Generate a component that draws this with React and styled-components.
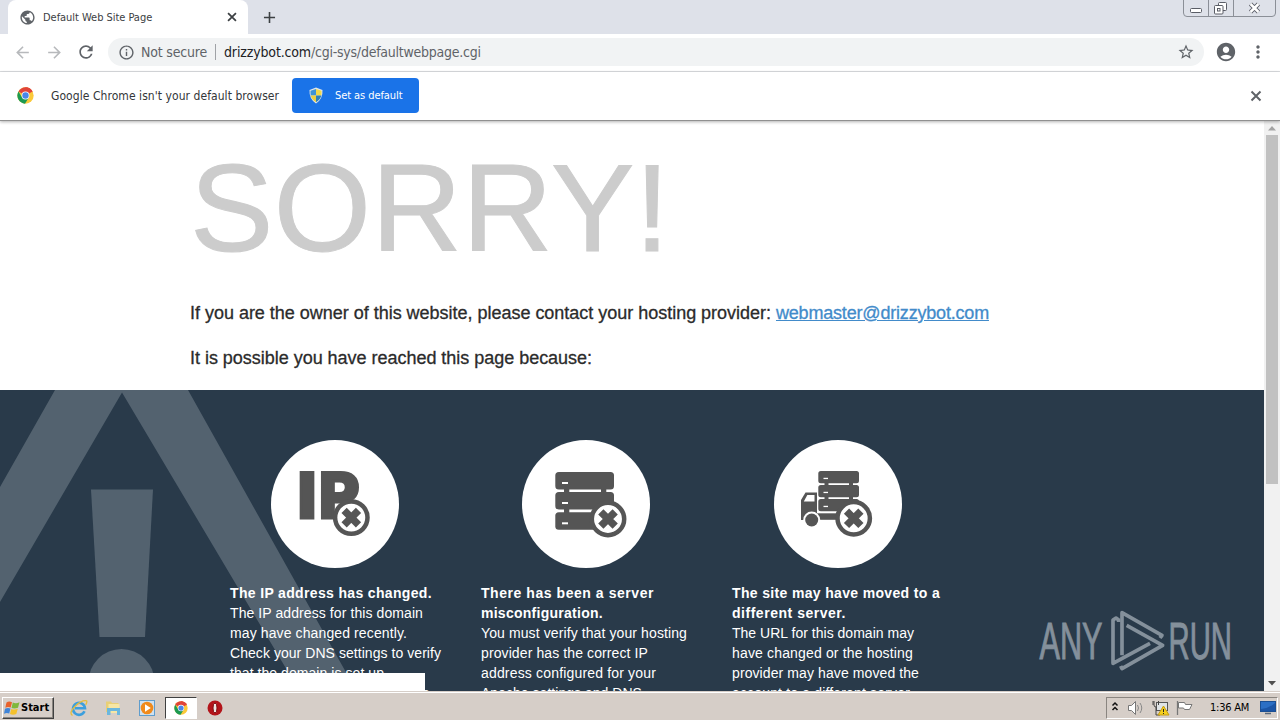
import styled, { createGlobalStyle, css } from "styled-components";
import {
  MdAccountCircle,
  MdAdd,
  MdArrowBack,
  MdArrowForward,
  MdInfoOutline,
  MdMoreVert,
  MdPublic,
  MdRefresh,
  MdStarBorder,
} from "react-icons/md";

const reasons = [
  {
    icon: "ip",
    title: [["The IP address has changed.", 0.344]],
    lines: [
      ["The IP address for this domain", 0.086],
      ["may have changed recently.", 0.112],
      ["Check your DNS settings to verify", 0.052],
      ["that the domain is set up", 0.058],
      ["correctly. It may take some time", 0.1],
    ],
  },
  {
    icon: "server",
    title: [
      ["There has been a server", 0.552],
      ["misconfiguration.", 0.267],
    ],
    lines: [
      ["You must verify that your hosting", 0.103],
      ["provider has the correct IP", 0.104],
      ["address configured for your", 0.169],
      ["Apache settings and DNS", 0.029],
    ],
  },
  {
    icon: "truck",
    title: [
      ["The site may have moved to a", 0.343],
      ["different server.", 0.526],
    ],
    lines: [
      ["The URL for this domain may", 0.016],
      ["have changed or the hosting", 0.159],
      ["provider may have moved the", 0.095],
      ["account to a different server.", 0.162],
    ],
  },
];

export default function App() {
  return (
    <Screen>
      <GlobalStyle />
      <TabStrip>
        <Tab>
          <MdPublic size={17} color="#5f6368" />
          <TabTitle>Default Web Site Page</TabTitle>
          <CloseIcon size={14} />
        </Tab>
        <NewTab>
          <MdAdd size={19} />
        </NewTab>
        <WindowButtons />
      </TabStrip>
      <Toolbar>
        <NavButton $muted>
          <MdArrowBack size={19} />
        </NavButton>
        <NavButton $muted>
          <MdArrowForward size={19} />
        </NavButton>
        <NavButton>
          <MdRefresh size={20} />
        </NavButton>
        <Omnibox>
          <MdInfoOutline size={17} />
          <Security>Not secure</Security>
          <Separator />
          <Host>drizzybot.com</Host>
          <Path>/cgi-sys/defaultwebpage.cgi</Path>
          <MdStarBorder size={18} />
        </Omnibox>
        <Profile>
          <MdAccountCircle size={22} />
        </Profile>
        <MdMoreVert size={20} />
      </Toolbar>
      <InfoBar>
        <ChromeLogo size={17} />
        <InfoText>Google Chrome isn't your default browser</InfoText>
        <DefaultButton>
          <Shield />
          <span>Set as default</span>
        </DefaultButton>
        <CloseIcon size={16} />
      </InfoBar>
      <Viewport>
        <Page>
          <Heading>SORRY!</Heading>
          <Lead $spacing={-0.018}>
            If you are the owner of this website, please contact your hosting provider:{" "}
            <MailLink href="#">webmaster@drizzybot.com</MailLink>
          </Lead>
          <Lead $spacing={-0.025}>It is possible you have reached this page because:</Lead>
          <Reasons>
            <WarningSign />
            {reasons.map((reason) => (
              <Reason key={reason.icon}>
                <ReasonIcon name={reason.icon} />
                {reason.title.map(([text, spacing]) => (
                  <Line key={text} $bold $spacing={spacing}>
                    {text}
                  </Line>
                ))}
                {reason.lines.map(([text, spacing]) => (
                  <Line key={text} $spacing={spacing}>
                    {text}
                  </Line>
                ))}
              </Reason>
            ))}
          </Reasons>
        </Page>
        <Scrollbar>
          <Arrow viewBox="0 0 16 14">
            <path d="M4 9.5L8 5l4 4.5z" fill="#a3a3a3" />
          </Arrow>
          <Thumb />
          <Arrow viewBox="0 0 16 14">
            <path d="M4 4l4 4.500L12 4z" fill="#505050" />
          </Arrow>
        </Scrollbar>
        <StatusBubble />
        <Watermark />
      </Viewport>
      <Taskbar>
        <StartButton>
          <WindowsFlag />
          Start
        </StartButton>
        <Launcher>
          <ExplorerIcon />
        </Launcher>
        <Launcher>
          <FolderIcon />
        </Launcher>
        <Launcher>
          <MediaIcon />
        </Launcher>
        <Launcher $active>
          <ChromeLogo size={14} />
        </Launcher>
        <Launcher>
          <OperaIcon />
        </Launcher>
        <Tray>
          <TrayIcons />
          <Clock>1:36 AM</Clock>
          <DesktopIcon />
        </Tray>
      </Taskbar>
    </Screen>
  );
}

function CloseIcon({ size }) {
  return (
    <svg width={size} height={size} viewBox="0 0 16 16" stroke="currentColor" strokeWidth="2">
      <path d="M3.500 3.500l9 9M12.500 3.500l-9 9" />
    </svg>
  );
}

function WindowButtons() {
  return (
    <Caption width="94" height="18" viewBox="0 0 94 18" fill="none">
      <path d="M.5 0V13q0 3.500 3.500 3.500H89q3.500 0 3.500-3.500V0M25.500 0v16M50.500 0v16" stroke="#8b8f97" />
      <rect x="7.500" y="8.500" width="11" height="4" rx="1" fill="#fff" stroke="#5a5d66" />
      <rect x="35.500" y="2.500" width="8" height="8" rx="1" fill="#fff" stroke="#5a5d66" />
      <rect x="31.500" y="5.500" width="8.500" height="8.500" rx="1" fill="#fff" stroke="#5a5d66" />
      <rect x="34.500" y="8.500" width="2.500" height="2.500" stroke="#5a5d66" />
      <path d="M67.500 4l8 8M75.500 4l-8 8" stroke="#5a5d66" strokeWidth="4.500" />
      <path d="M67.500 4l8 8M75.500 4l-8 8" stroke="#fff" strokeWidth="2.500" />
    </Caption>
  );
}

function ChromeLogo({ size }) {
  return (
    <svg width={size} height={size} viewBox="0 0 48 48">
      <circle cx="24" cy="24" r="23" fill="#fbc93a" />
      <path d="M24 24L4.100 12.500A23 23 0 0 1 43.900 12.500z" fill="#e0443a" />
      <path d="M24 1A23 23 0 0 1 44 13H24z" fill="#e0443a" />
      <path d="M4.100 12.500A23 23 0 0 0 22.500 47L33.500 29.500 24 24 14.500 29.500z" fill="#1c9a52" />
      <circle cx="24" cy="24" r="11" fill="#fff" />
      <circle cx="24" cy="24" r="9" fill="#4a86e8" />
    </svg>
  );
}

function Shield() {
  return (
    <svg width="16" height="17" viewBox="0 0 16 17">
      <path d="M8 .5L14.500 3q.5 9-6.500 13.500Q1 12 1.500 3z" fill="#dfe6ea" />
      <path d="M8 2v6.500H2.700Q2.400 6 2.500 3.800z" fill="#3d93d8" />
      <path d="M8 2v6.500h5.300Q13.600 6 13.500 3.800z" fill="#f0d84a" />
      <path d="M8 8.500H2.700Q3.600 12.500 8 15.200z" fill="#ecd041" />
      <path d="M8 8.500h5.300Q12.400 12.500 8 15.200z" fill="#2f80b8" />
    </svg>
  );
}

function WarningSign() {
  return (
    <Sign width="360" height="302" viewBox="0 0 360 302" fill="#53626f">
      <path d="M55 0H188L357 302H300L122 2.500 0 212V97z" />
      <path d="M91 99.500h62L145 247H99.500z" />
      <circle cx="121.500" cy="292" r="33" />
    </Sign>
  );
}

function Cross({ x, y }) {
  return (
    <g transform={`translate(${x} ${y})`}>
      <circle r="16.200" fill="#fff" stroke="#555" strokeWidth="4.500" />
      <path d="M-7.200-7.200L7.200 7.200M7.200-7.200L-7.200 7.200" stroke="#555" strokeWidth="7.400" />
    </g>
  );
}

function ReasonIcon({ name }) {
  return (
    <Disc viewBox="0 0 128 128" fill="#555">
      <circle cx="64" cy="64" r="64" fill="#fff" />
      {name === "ip" && (
        <>
          <IpText x="24.500" y="77.500">
            I
          </IpText>
          <IpText x="46" y="77.500" textLength="43" lengthAdjust="spacingAndGlyphs">
            P
          </IpText>
          <Cross x={80.300} y={77.600} />
        </>
      )}
      {name === "server" && (
        <>
          <path d="M42 48h5.300v26H42zM79 48h5.300v26H79z" />
          {[32, 52, 72.300].map((y) => (
            <g key={y}>
              <rect x="33.300" y={y} width="58.700" height="17.400" rx="3.500" />
              <rect x="40" y={y + 10} width="6" height="2" fill="#fff" />
            </g>
          ))}
          <Cross x={86} y={79} />
        </>
      )}
      {name === "truck" && (
        <>
          {[31, 45, 59].map((y) => (
            <g key={y}>
              <rect x="44.300" y={y} width="40.700" height="12.200" rx="2.500" />
              <rect x="49.500" y={y + 6.800} width="4.500" height="1.300" fill="#fff" />
            </g>
          ))}
          <path d="M50.500 42.500h4v3h-4zM75 42.500h4v3h-4zM50.500 56.500h4v3h-4zM75 56.500h4v3h-4z" />
          <path d="M27 80V60l4.500-7.500H43V80z" />
          <path d="M29.800 61.500l3.500-6.500h7.200v6.500z" fill="#fff" />
          <path d="M43 73.300h22v6.500H43z" />
          <circle cx="37.700" cy="80" r="8.500" fill="#fff" />
          <circle cx="37.700" cy="80" r="6.500" />
          <Cross x={79.700} y={78.300} />
        </>
      )}
    </Disc>
  );
}

function Watermark() {
  return (
    <Mark width="200" height="70" viewBox="0 0 200 70" fill="#84909b">
      <MarkText x="4.500" y="54" textLength="63" lengthAdjust="spacingAndGlyphs">
        ANY
      </MarkText>
      <MarkText x="133.500" y="54" textLength="63.500" lengthAdjust="spacingAndGlyphs">
        RUN
      </MarkText>
      <g transform="translate(65 -5) scale(.3333)" fill="none" stroke="#84909b" strokeWidth="11" strokeLinejoin="round">
        <path d="M66 166V38L186 106l-6 8" />
        <path d="M56 66V60l-8-6-9 6v130L150 130" />
        <path d="M80 76L188 136 66 206l-4-8" />
      </g>
    </Mark>
  );
}

function WindowsFlag() {
  return (
    <svg width="16" height="16" viewBox="0 0 16 16">
      <path d="M2.500 2.500Q5 .8 8 2.300L6.700 7.600Q4 6.300 1.300 7.800z" fill="#e8622c" />
      <path d="M8.800 2.600Q12 4 15.500 2.200L14 7.800Q10.500 9 7.500 8z" fill="#7fb83c" />
      <path d="M1 8.700Q3.800 7.200 6.500 8.500L5.200 13.500Q2.800 12.300 0 13.700z" fill="#3f84d8" />
      <path d="M7.300 8.900Q10.500 10 13.800 8.700L12.300 14Q9 15.500 6 14z" fill="#f4c12c" />
    </svg>
  );
}

function ExplorerIcon() {
  return (
    <svg width="18" height="18" viewBox="0 0 18 18" fill="none">
      <path d="M14.500 12.300A6 6 0 1 1 15 9.300H5" stroke="#3c9fdd" strokeWidth="2.600" />
      <path d="M2.500 16.500Q-1.500 14 5 7.500T16.500 1.800q1 1-.8 4" stroke="#e5bd3c" strokeWidth="1.300" />
    </svg>
  );
}

function FolderIcon() {
  return (
    <svg width="18" height="18" viewBox="0 0 18 18">
      <path d="M2 2.500h5l1 1.500h6.500V13H2z" fill="#e8cf77" />
      <path d="M4.500 5h11v9h-11z" fill="#f6e6a4" />
      <path d="M3 9h13v7h-3v-4H6.500v4H3z" fill="#6bb7de" />
    </svg>
  );
}

function MediaIcon() {
  return (
    <svg width="18" height="18" viewBox="0 0 18 18">
      <rect x="1.500" y="1.500" width="15" height="15" fill="#cfe1f0" stroke="#5f9dcd" />
      <circle cx="9" cy="9" r="6.300" fill="#f08a1c" />
      <path d="M7 5.300v7.400L12.800 9z" fill="#fff" />
    </svg>
  );
}

function OperaIcon() {
  return (
    <svg width="18" height="18" viewBox="0 0 18 18">
      <circle cx="9" cy="9" r="7.500" fill="#b3141a" />
      <ellipse cx="9" cy="9" rx="2" ry="5" fill="#efe6e2" stroke="#7e0a10" />
    </svg>
  );
}

function TrayIcons() {
  return (
    <svg width="86" height="20" viewBox="0 0 86 20" fill="none">
      <path d="M2.500 7.500L5 5l2.500 2.500M2.500 12L5 9.500l2.500 2.500" stroke="#111" strokeWidth="1.500" />
      <path d="M18.500 7.500h3l4-4v13l-4-4h-3z" fill="#fff" stroke="#777" />
      <path d="M27.500 7q2 3 0 6M30 5q3.500 5 0 10" stroke="#888" />
      <rect x="46.500" y="4.500" width="11" height="8" fill="#dfe3e6" stroke="#555" />
      <path d="M44 3v4q0 2 2 2v8h4M43 3v4M48.500 3v4" stroke="#444" />
      <path d="M52.500 8L58 17H47z" fill="#f5cf1c" stroke="#c59b10" transform="translate(1)" />
      <path d="M53.500 11v3M53.500 15v1" stroke="#222" />
      <path d="M67.500 3v14" stroke="#777" strokeWidth="1.300" />
      <path d="M68.500 4.500h6l1 2h6.500l-2.500 5h-5l-1-1.500h-5z" fill="#fff" stroke="#777" />
    </svg>
  );
}

function DesktopIcon() {
  return (
    <svg width="16" height="14" viewBox="0 0 16 14">
      <rect x=".5" y=".5" width="15" height="10" fill="#2c6fc4" stroke="#1b4f93" />
      <path d="M1 8Q8 8 15 2v8H1z" fill="#1c55a5" />
      <path d="M5 12.500h6" stroke="#5b6a7c" strokeWidth="1.500" />
    </svg>
  );
}

const GlobalStyle = createGlobalStyle`
  body {
    margin: 0;
    overflow: hidden;
  }
  svg {
    flex: none;
    display: block;
  }
`;

const uiFont = css`
  font-family: "DejaVu Sans Condensed", "DejaVu Sans", sans-serif;
`;

const Screen = styled.div`
  ${uiFont}
  display: flex;
  flex-direction: column;
  width: 1280px;
  height: 720px;
  overflow: hidden;
  background: #fff;
`;

const TabStrip = styled.div`
  display: flex;
  height: 34px;
  padding-left: 8px;
  background: #dee1e9;
`;

const Tab = styled.div`
  display: flex;
  align-items: center;
  box-sizing: border-box;
  width: 240px;
  padding: 0 9px 0 11px;
  border-radius: 8px 8px 0 0;
  background: #fff;
  color: #3c4043;
`;

const TabTitle = styled.span`
  flex: 1;
  margin-left: 7px;
  font-size: 11px;
  letter-spacing: -0.04px;
`;

const NewTab = styled.div`
  display: flex;
  align-items: center;
  flex: 1;
  padding-left: 12px;
  color: #3c4043;
`;

const Caption = styled.svg`
  margin-right: 3px;
`;

const Toolbar = styled.div`
  display: flex;
  align-items: center;
  box-sizing: border-box;
  height: 38px;
  padding: 0 11px 1px 12px;
  border-bottom: 1px solid #dcdee1;
  color: #5f6368;
`;

const NavButton = styled.div`
  display: flex;
  align-items: center;
  justify-content: center;
  width: 20px;
  margin-right: 12px;
  color: ${({ $muted }) => ($muted ? "#b7b9bc" : "#5f6368")};
`;

const Omnibox = styled.div`
  display: flex;
  align-items: center;
  box-sizing: border-box;
  width: 1096px;
  height: 28px;
  padding: 0 9px 0 10px;
  border-radius: 14px;
  background: #f1f3f4;
  font-size: 14px;
  white-space: nowrap;
`;

const Security = styled.span`
  margin-left: 6px;
  letter-spacing: -0.191px;
`;

const Separator = styled.span`
  width: 1px;
  height: 16px;
  margin: 0 8px;
  background: #9fa2a6;
`;

const Host = styled.span`
  color: #202124;
  letter-spacing: -0.145px;
`;

const Path = styled.span`
  flex: 1;
  letter-spacing: -0.24px;
`;

const Profile = styled.div`
  margin: 0 11px;
`;

const InfoBar = styled.div`
  position: relative;
  display: flex;
  align-items: center;
  box-sizing: border-box;
  height: 49px;
  padding: 0 16px 1px 17px;
  border-bottom: 1px solid #909090;
  box-shadow: 0 1px 3px rgba(0, 0, 0, 0.3);
  background: #fff;
  color: #5f6368;
  z-index: 1;
`;

const InfoText = styled.span`
  width: 241px;
  margin-left: 17px;
  color: #333639;
  font-size: 12px;
  letter-spacing: 0.06px;
  white-space: nowrap;
`;

const DefaultButton = styled.div`
  display: flex;
  align-items: center;
  box-sizing: border-box;
  width: 127px;
  height: 35px;
  margin-right: auto;
  padding-left: 16px;
  gap: 11px;
  border-radius: 4px;
  background: #1a73e8;
  color: #fff;
  font-size: 11px;
  letter-spacing: -0.08px;
`;

const Viewport = styled.div`
  position: relative;
  display: flex;
  height: 570px;
  overflow: hidden;
`;

const Page = styled.div`
  width: 1264px;
  font-family: "Liberation Sans", Arial, sans-serif;
`;

const Heading = styled.h1`
  margin: 24px 0 29px 190px;
  color: #ccc;
  font-size: 125px;
  font-weight: 400;
  line-height: 126px;
  letter-spacing: 0.5px;
  -webkit-text-stroke: 1px;
`;

const Lead = styled.p`
  margin: 0 0 19px 190px;
  color: #2b2b2b;
  font-size: 18px;
  line-height: 26px;
  letter-spacing: ${({ $spacing }) => $spacing}px;
  white-space: nowrap;
  -webkit-text-stroke: 0.3px;
`;

const MailLink = styled.a`
  color: #428bca;
  letter-spacing: -0.189px;
`;

const Reasons = styled.div`
  position: relative;
  display: flex;
  gap: 40px;
  height: 400px;
  padding: 50px 0 0 230px;
  background: #293a4a;
  color: #fff;
`;

const Sign = styled.svg`
  position: absolute;
  left: 0;
  top: 0;
`;

const Reason = styled.section`
  position: relative;
  width: 211px;

  &:last-child svg {
    margin-left: 42px;
  }
`;

const Disc = styled.svg`
  width: 128px;
  height: 128px;
  margin: 0 0 15px 41px;
`;

const IpText = styled.text`
  font: bold 62px "DejaVu Sans", sans-serif;
  stroke: #555;
  stroke-width: 3px;
`;

const Line = styled.div`
  font-size: 14px;
  font-weight: ${({ $bold }) => ($bold ? 700 : 400)};
  line-height: 20px;
  letter-spacing: ${({ $spacing }) => $spacing}px;
  white-space: nowrap;
`;

const Scrollbar = styled.div`
  display: flex;
  flex-direction: column;
  width: 16px;
  background: #f1f1f1;
`;

const Arrow = styled.svg`
  width: 16px;
  height: 14px;
`;

const Thumb = styled.div`
  width: 12px;
  height: 349px;
  margin: 0 2px auto;
  background: #c1c1c1;
`;

const StatusBubble = styled.div`
  position: absolute;
  left: 0;
  bottom: 0;
  width: 425px;
  height: 18px;
  background: #fff;
`;

const Mark = styled.svg`
  position: absolute;
  left: 1035px;
  top: 484px;
`;

const MarkText = styled.text`
  font: 51px "Liberation Sans", sans-serif;
  stroke: #84909b;
  stroke-width: 1px;
`;

const Taskbar = styled.div`
  display: flex;
  align-items: center;
  box-sizing: border-box;
  height: 29px;
  padding: 3px 2px 0;
  border-top: 1px solid #d6cec8;
  box-shadow: inset 0 1px #fff;
  background: #d6cec8;
`;

const StartButton = styled.div`
  display: flex;
  align-items: center;
  box-sizing: border-box;
  width: 52px;
  height: 22px;
  margin-right: 16px;
  padding-left: 1px;
  gap: 1px;
  border: 1px solid;
  border-color: #fff #404040 #404040 #fff;
  box-shadow: inset -1px -1px #8a8580;
  font-size: 11px;
  font-weight: 700;
`;

const Launcher = styled.div`
  display: flex;
  align-items: center;
  justify-content: center;
  box-sizing: border-box;
  width: ${({ $active }) => ($active ? 32 : 18)}px;
  height: 22px;
  margin-right: ${({ $active }) => ($active ? 9 : 16)}px;
  ${({ $active }) =>
    $active &&
    css`
      margin-left: -7px;
      border: 1px solid;
      border-color: #404040 #fff #fff #404040;
      background: #fff;
    `}
`;

const Tray = styled.div`
  display: flex;
  align-items: center;
  box-sizing: border-box;
  width: 172px;
  height: 22px;
  margin-left: auto;
  padding-left: 3px;
  border: 1px solid;
  border-color: #8a8580 #fff #fff #8a8580;
`;

const Clock = styled.span`
  margin: 0 11px 0 14px;
  font-size: 11px;
  letter-spacing: -0.24px;
  white-space: nowrap;
`;
